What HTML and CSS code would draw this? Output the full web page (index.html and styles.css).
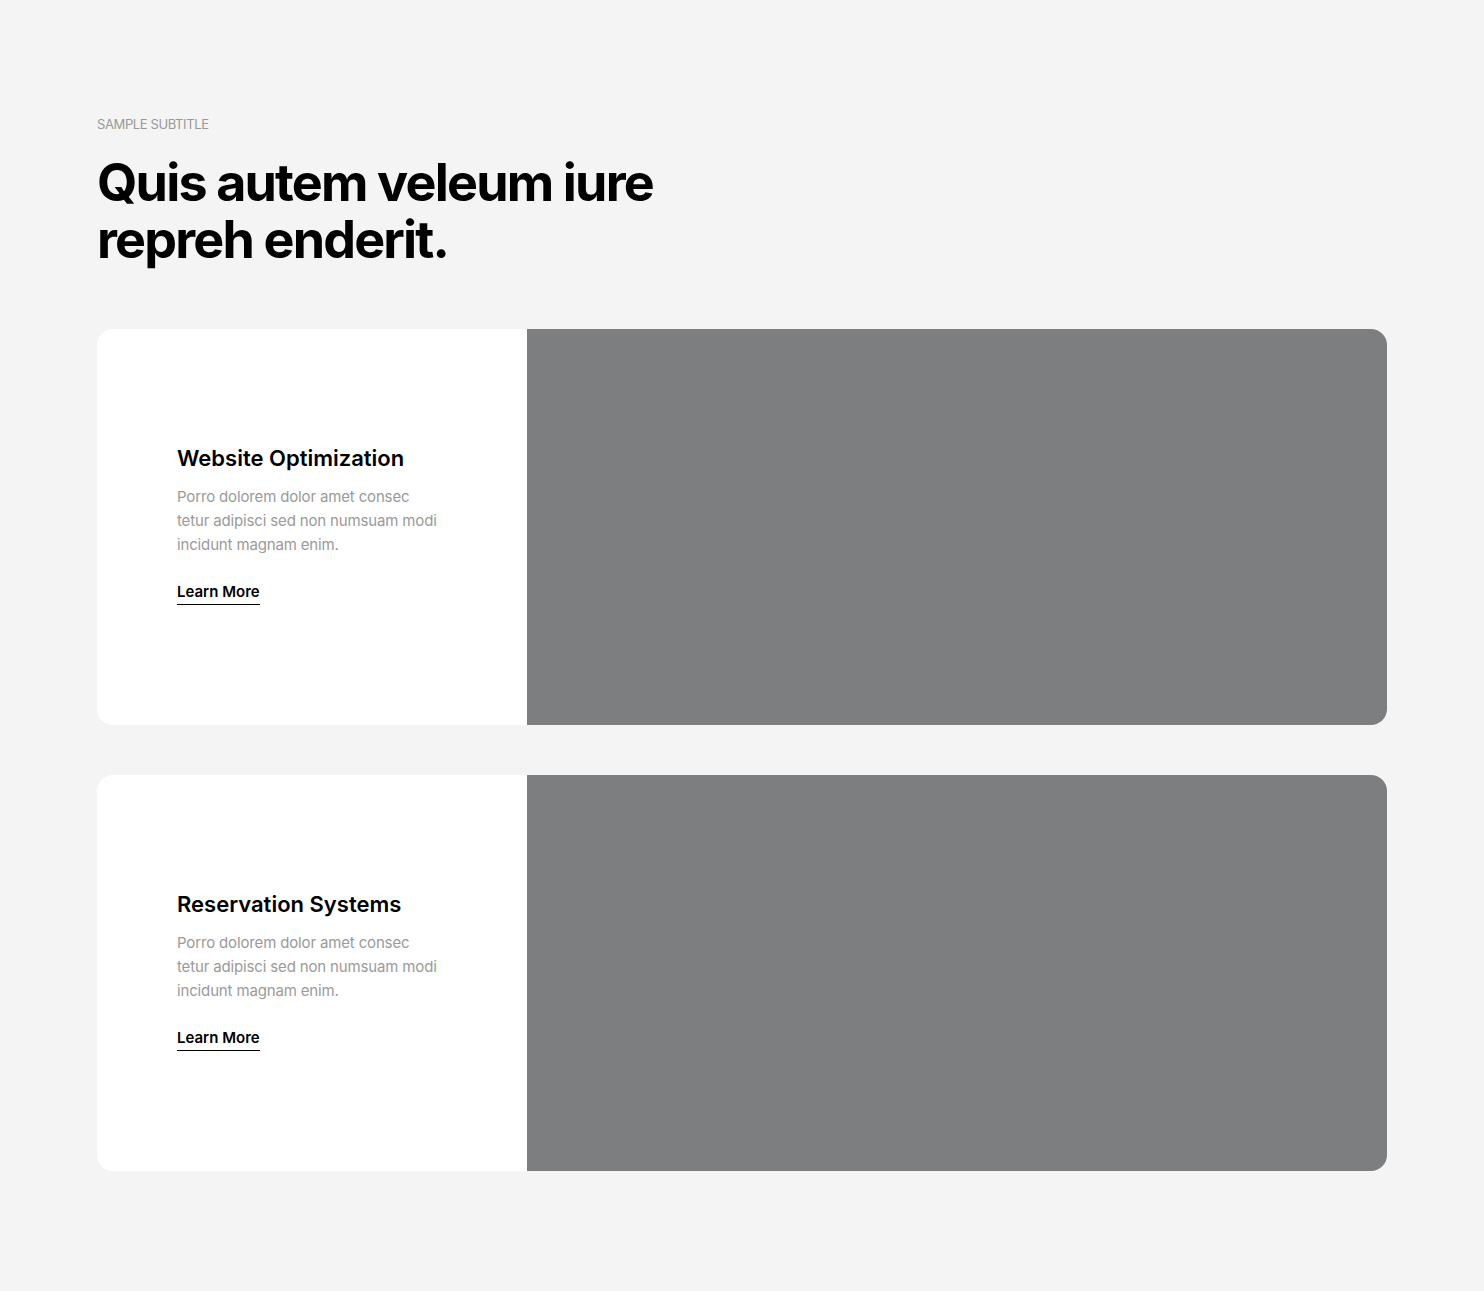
FILE: index.html
```html
<!DOCTYPE html>
<html lang="en">
<head>
    <meta charset="UTF-8">
    <meta name="viewport" content="width=device-width, initial-scale=1.0">
    <title>Services</title>
    <link rel="stylesheet" href="styles.css">
</head>
<body>
    <section class="services">
        <div class="container">
            <div class="section-head">
                <span class="subtitle">Sample Subtitle</span>
                <h2 class="section-title">Quis autem veleum iure<br>repreh enderit.</h2>
            </div>

            <div class="service-card">
                <div class="service-info">
                    <h3 class="service-title">Website Optimization</h3>
                    <p class="service-text">Porro dolorem dolor amet consec tetur adipisci sed non numsuam modi incidunt magnam enim.</p>
                    <a href="#" class="learn-more">Learn More</a>
                </div>
                <div class="service-media"></div>
            </div>

            <div class="service-card">
                <div class="service-info">
                    <h3 class="service-title">Reservation Systems</h3>
                    <p class="service-text">Porro dolorem dolor amet consec tetur adipisci sed non numsuam modi incidunt magnam enim.</p>
                    <a href="#" class="learn-more">Learn More</a>
                </div>
                <div class="service-media"></div>
            </div>
        </div>
    </section>
</body>
</html>
```

FILE: styles.css
```css
/* Reset */
html, body {
    margin: 0;
    padding: 0;
    background-color: #f4f4f4;
    font-family: 'Inter', 'Noto Sans', sans-serif;
    color: #000000;
}
.services {
    padding: 116px 0 120px;
}
.container {
    width: 1290px;
    margin: 0 auto;
}
/* Section heading */
.section-head {
    margin-bottom: 61px;
}
.subtitle {
    display: block;
    font-size: 13px;
    line-height: 16px;
    text-transform: uppercase;
    color: #999999;
    letter-spacing: -0.03em;
}
.section-title {
    margin: 22px 0 0;
    font-size: 52px;
    line-height: 57px;
    font-weight: 700;
    letter-spacing: -0.035em;
}
/* Cards */
.service-card {
    display: flex;
    height: 396px;
    border-radius: 16px;
    overflow: hidden;
    background-color: #ffffff;
    margin-bottom: 50px;
}
.service-card:last-child {
    margin-bottom: 0;
}
.service-info {
    width: 430px;
    flex-shrink: 0;
    box-sizing: border-box;
    padding: 0 80px 6px;
    display: flex;
    flex-direction: column;
    justify-content: center;
    align-items: flex-start;
}
.service-title {
    margin: 0 0 13px;
    font-size: 22px;
    line-height: 28px;
    font-weight: 600;
}
.service-text {
    max-width: 265px;
    margin: 0 0 25px;
    font-size: 15px;
    line-height: 24px;
    color: #9a9a9a;
    letter-spacing: -0.01em;
}
.learn-more {
    font-size: 15px;
    line-height: 20px;
    font-weight: 600;
    color: #000000;
    text-decoration: none;
    border-bottom: 1px solid #000000;
    padding-bottom: 2px;
}
/* Placeholder image */
.service-media {
    flex-grow: 1;
    background-color: #7d7e80;
}
```
